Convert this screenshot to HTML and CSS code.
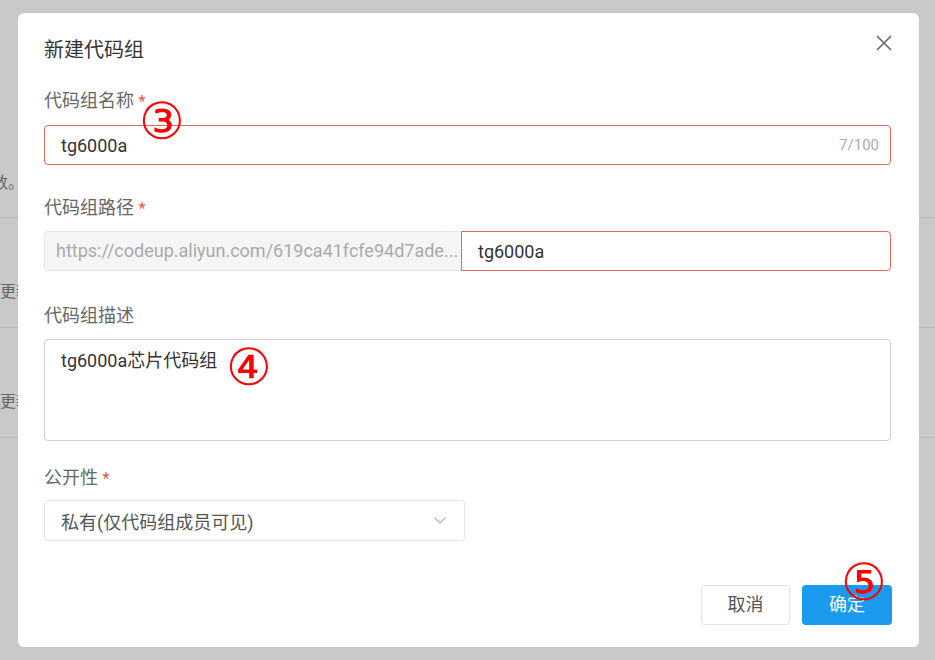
FILE: index.html
```html
<!DOCTYPE html>
<html lang="zh-CN">
<head>
<meta charset="utf-8">
<title>新建代码组</title>
<link rel="stylesheet" href="styles.css">
</head>
<body>
<div class="page">
  <div class="page-row page-row-first"><span class="page-text shift">数。</span></div>
  <div class="page-row"><span class="page-text">更新</span></div>
  <div class="page-row"><span class="page-text">更新</span></div>
</div>

<div class="modal">
  <div class="modal-header">
    <div class="modal-title">新建代码组</div>
    <button class="close" aria-label="关闭">
      <svg width="16" height="16" viewBox="0 0 16 16"><path d="M1 1 L15 15 M15 1 L1 15" stroke="#666" stroke-width="1.6" fill="none"/></svg>
    </button>
  </div>

  <div class="form-item item-name">
    <div class="label">代码组名称 <span class="req">*</span></div>
    <div class="input input-error">
      <span class="value">tg6000a</span>
      <span class="count">7/100</span>
    </div>
  </div>

  <div class="form-item item-path">
    <div class="label">代码组路径 <span class="req">*</span></div>
    <div class="group">
      <div class="prefix">https://codeup.aliyun.com/619ca41fcfe94d7ade...</div>
      <div class="input input-error group-input"><span class="value">tg6000a</span></div>
    </div>
  </div>

  <div class="form-item item-desc">
    <div class="label">代码组描述</div>
    <div class="textarea">tg6000a芯片代码组</div>
  </div>

  <div class="form-item item-vis">
    <div class="label">公开性 <span class="req">*</span></div>
    <div class="select">
      <span class="value">私有(仅代码组成员可见)</span>
      <svg class="chevron" width="12" height="7" viewBox="0 0 12 7"><path d="M0.5 0.5 L6 6 L11.5 0.5" stroke="#b5b5b5" stroke-width="1.3" fill="none"/></svg>
    </div>
  </div>

  <div class="footer">
    <button class="btn btn-cancel">取消</button>
    <button class="btn btn-primary">确定</button>
  </div>

  <span class="mark mark-3">③</span>
  <span class="mark mark-4">④</span>
  <span class="mark mark-5">⑤</span>
</div>
</body>
</html>
```

FILE: styles.css
```css
html, body {
  margin: 0;
  padding: 0;
}
body {
  width: 935px;
  height: 660px;
  overflow: hidden;
  background: #c9c9c9;
  font-family: Roboto, "Noto Sans CJK SC", sans-serif;
  position: relative;
}

/* background page (dimmed) */
.page {
  width: 935px;
}
.page-row {
  height: 109px;
  border-bottom: 1px solid #b8b8b8;
  box-sizing: content-box;
}
.page-row-first {
  height: 217px;
}
.page-text {
  display: block;
  font-size: 16px;
  line-height: 24px;
  color: #666;
  padding-top: 62px;
  white-space: nowrap;
}
.page-row-first .page-text {
  padding-top: 171px;
}
.shift {
  margin-left: -8px;
}

/* modal */
.modal {
  position: absolute;
  left: 18px;
  top: 13px;
  width: 901px;
  height: 634px;
  box-sizing: border-box;
  padding: 24px 28px 0 26px;
  background: #fff;
  border-radius: 6px;
}
.modal-header {
  display: flex;
  justify-content: space-between;
  align-items: flex-start;
  height: 26px;
  margin-bottom: 26px;
}
.modal-title {
  font-size: 20px;
  line-height: 26px;
  color: #333;
}
.close {
  border: 0;
  background: none;
  padding: 0;
  margin: -2px -1px 0 0;
  width: 16px;
  height: 16px;
  display: block;
}
.close svg { display: block; }

.label {
  font-size: 18px;
  line-height: 24px;
  height: 24px;
  color: #666;
  margin-bottom: 12px;
}
.req {
  color: #e8564a;
  font-size: 16px;
  line-height: 0;
}
.item-name { margin-bottom: 31px; }
.item-path { margin-bottom: 33px; }
.item-path .label { margin-bottom: 11px; }
.item-desc { margin-bottom: 25px; }
.item-desc .label { margin-bottom: 11px; }
.item-vis .label { margin-bottom: 10px; }

.input {
  height: 40px;
  box-sizing: border-box;
  border: 1px solid #d9d9d9;
  border-radius: 4px;
  display: flex;
  align-items: center;
  justify-content: space-between;
  padding: 0 11px 0 16px;
  font-size: 18px;
  color: #333;
}
.input-error {
  border-color: #e4675a;
}
.count {
  font-size: 15px;
  color: #aaa;
}

.group {
  display: flex;
  height: 40px;
}
.prefix {
  width: 417px;
  flex: none;
  box-sizing: border-box;
  height: 40px;
  line-height: 38px;
  background: #f5f5f5;
  border: 1px solid #e6e6e6;
  border-right: 0;
  border-radius: 4px 0 0 4px;
  padding-left: 11px;
  font-size: 18px;
  color: #aaa;
  white-space: nowrap;
  overflow: hidden;
}
.group-input {
  flex: 1;
  border-radius: 0 4px 4px 0;
}

.textarea {
  height: 102px;
  box-sizing: border-box;
  border: 1px solid #cfcfcf;
  border-radius: 4px;
  padding: 8px 16px;
  font-size: 18px;
  line-height: 26px;
  color: #333;
}

.select {
  width: 421px;
  height: 41px;
  box-sizing: border-box;
  border: 1px solid #e6e6e6;
  border-radius: 4px;
  display: flex;
  align-items: center;
  justify-content: space-between;
  padding: 0 18px 0 16px;
  font-size: 18px;
  color: #555;
}
.chevron { display: block; }

.footer {
  display: flex;
  justify-content: flex-end;
  gap: 12px;
  margin-top: 44px;
  margin-right: -1px;
}
.btn {
  height: 40px;
  box-sizing: border-box;
  border-radius: 4px;
  font-family: Roboto, "Noto Sans CJK SC", sans-serif;
  font-size: 18px;
  line-height: 20px;
  padding: 0;
  cursor: pointer;
}
.btn-cancel {
  width: 89px;
  background: #fff;
  border: 1px solid #e3e3e3;
  color: #555;
}
.btn-primary {
  width: 90px;
  background: #1b9aee;
  border: 0;
  color: #fff;
}

/* red annotation marks */
.mark {
  position: absolute;
  font-family: "DejaVu Sans", "Noto Sans CJK SC", serif;
  font-size: 51px;
  line-height: 1;
  color: #f00;
}
.mark-3 { left: 121px; top: 83px; }
.mark-4 { left: 208px; top: 329px; }
.mark-5 { left: 823px; top: 544px; }
```
